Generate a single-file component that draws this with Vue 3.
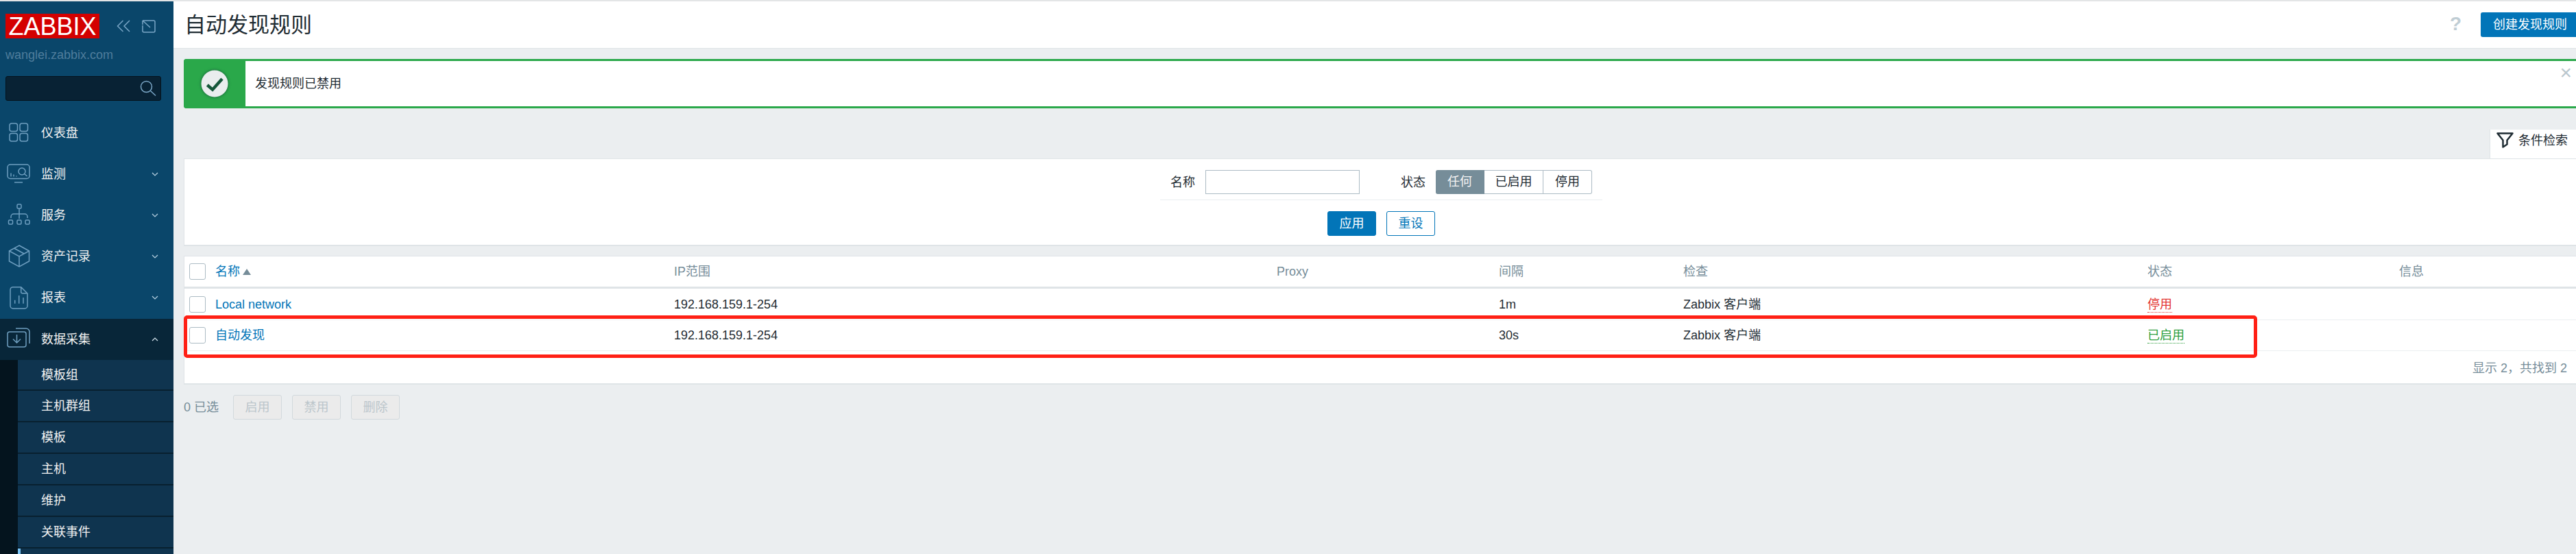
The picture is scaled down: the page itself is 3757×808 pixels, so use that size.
<script setup>
const menu = [
  { label: '仪表盘', icon: 'dash' },
  { label: '监测', icon: 'mon', arrow: true },
  { label: '服务', icon: 'svc', arrow: true },
  { label: '资产记录', icon: 'box', arrow: true },
  { label: '报表', icon: 'rep', arrow: true },
]
const sub = ['模板组', '主机群组', '模板', '主机', '维护', '关联事件']
const rows = [
  { name: 'Local network', ip: '192.168.159.1-254', proxy: '', interval: '1m', check: 'Zabbix 客户端', status: '停用', cls: 'off' },
  { name: '自动发现', ip: '192.168.159.1-254', proxy: '', interval: '30s', check: 'Zabbix 客户端', status: '已启用', cls: 'on' },
]
</script>

<template>
  <div class="page">
    <aside class="side">
      <div class="brand">
        <div class="logo">ZABBIX</div>
        <svg class="collapse" width="20" height="18" viewBox="0 0 20 18" fill="none" stroke="#7ba7c7" stroke-width="1.5"><path d="M9.500 1 1.500 9l8 8M19 1l-8 8 8 8"/></svg>
        <svg class="expand" width="20" height="19" viewBox="0 0 20 19" fill="none" stroke="#7ba7c7" stroke-width="1.5"><path d="M5.500 1H17a2 2 0 0 1 2 2v13a2 2 0 0 1-2 2H3a2 2 0 0 1-2-2V8M1 1h6M1 1v6M1 1l11 10"/></svg>
      </div>
      <div class="host">wanglei.zabbix.com</div>
      <div class="search">
        <svg width="24" height="24" viewBox="0 0 24 24" fill="none" stroke="#7ba7c7" stroke-width="1.5"><circle cx="9.500" cy="9.500" r="8"/><path d="m15.500 15.500 7.500 7"/></svg>
      </div>
      <nav class="nav">
        <div v-for="m in menu" :key="m.label" class="item">
          <svg class="ico" width="36" height="60" viewBox="0 0 36 60" fill="none" stroke="#6f9fc0" stroke-width="1.5">
            <g v-if="m.icon === 'dash'"><rect x="4" y="16" width="11.500" height="11.500" rx="3"/><rect x="19" y="16" width="11.500" height="11.500" rx="3"/><rect x="4" y="30.500" width="11.500" height="11.500" rx="3"/><rect x="19" y="30.500" width="11.500" height="11.500" rx="3"/></g>
            <g v-else-if="m.icon === 'mon'"><rect x="1" y="16" width="32" height="20.500" rx="4"/><path d="M11 42h12M6 33.500v-5M10 33.500v-3M14 33.500v-1"/><circle cx="22" cy="26" r="5"/><path d="m25.500 29.500 4 3.500"/></g>
            <g v-else-if="m.icon === 'svc'"><rect x="15" y="14" width="6" height="6" rx="1.500"/><rect x="2.500" y="37" width="6" height="6" rx="1.500"/><rect x="15" y="37" width="6" height="6" rx="1.500"/><rect x="27" y="37" width="6" height="6" rx="1.500"/><path d="M18 20v15M6 34v-2a4 4 0 0 1 4-4h16a4 4 0 0 1 4 4v2"/></g>
            <g v-else-if="m.icon === 'box'"><path d="m18 14 14.500 8v15L18 45 3.500 37V22zM3.500 22 18 30l14.500-8M18 30v15M10.500 18 25 26"/></g>
            <g v-else><path d="M20.700 14.700H9a4 4 0 0 0-4 4V42a4 4 0 0 0 4 4h17a4 4 0 0 0 4-4V24zM20.700 14.700v7a2 2 0 0 0 2 2H30M11.700 38.700v-5M17.700 38.700V27M24 38.700V30"/></g>
          </svg>
          <span>{{ m.label }}</span>
          <svg v-if="m.arrow" class="chev" width="10" height="6" viewBox="0 0 10 6" fill="none" stroke="#b9d2e3" stroke-width="1.2"><path d="m1 1 4 4 4-4"/></svg>
        </div>
        <div class="item active">
          <svg class="ico" width="36" height="60" viewBox="0 0 36 60" fill="none" stroke="#6f9fc0" stroke-width="1.5"><rect x="1" y="19" width="27" height="22" rx="3"/><path d="M13 14h15a5 5 0 0 1 5 5v17M14.500 23v12M9 29.500l5.500 5.500 5.500-5.500"/></svg>
          <span>数据采集</span>
          <svg class="chev" width="10" height="6" viewBox="0 0 10 6" fill="none" stroke="#d7e5ef" stroke-width="1.2"><path d="m1 5 4-4 4 4"/></svg>
        </div>
        <div class="subwrap">
          <div v-for="s in sub" :key="s" class="subitem">{{ s }}</div>
          <div class="subsel"></div>
        </div>
      </nav>
    </aside>

    <main class="main">
      <header class="head">
        <h1>自动发现规则</h1>
        <span class="help">?</span>
        <button class="create">创建发现规则</button>
      </header>

      <div class="msg">
        <div class="msg-ico">
          <svg class="tick" width="40" height="40" viewBox="0 0 40 40"><circle cx="20" cy="20" r="19.500" fill="#e9edee"/><path d="m9.300 22 7.700 6.700L31 13" fill="none" stroke="#15573a" stroke-width="4.500"/></svg>
        </div>
        <span class="msg-text">发现规则已禁用</span>
        <span class="msg-x">×</span>
      </div>

      <div class="tabrow">
        <div class="tab">
          <svg width="25" height="23" viewBox="0 0 25 23" fill="none" stroke="#1f2c33" stroke-width="2.500" stroke-linejoin="round"><path d="M1.500 1.500h22l-8 10v6l-6 4v-10z"/></svg>
          <span>条件检索</span>
        </div>
      </div>

      <section class="filter">
        <div class="f-row">
          <label class="f-lab">名称</label>
          <input class="f-input" type="text" />
          <label class="f-lab f-lab2">状态</label>
          <div class="seg">
            <span class="seg1 sel">任何</span>
            <span class="seg2">已启用</span>
            <span class="seg3">停用</span>
          </div>
        </div>
        <div class="f-actions">
          <button class="apply">应用</button>
          <button class="reset">重设</button>
        </div>
      </section>

      <section class="list">
        <table>
          <colgroup>
            <col class="c1" /><col class="c2" /><col class="c3" /><col class="c4" />
            <col class="c5" /><col class="c6" /><col class="c7" /><col />
          </colgroup>
          <thead>
            <tr>
              <th><span class="cb"></span></th>
              <th class="link">名称<i class="sort"></i></th>
              <th>IP范围</th>
              <th>Proxy</th>
              <th>间隔</th>
              <th>检查</th>
              <th>状态</th>
              <th>信息</th>
            </tr>
          </thead>
          <tbody>
            <tr v-for="r in rows" :key="r.name">
              <td><span class="cb"></span></td>
              <td class="link">{{ r.name }}</td>
              <td>{{ r.ip }}</td>
              <td>{{ r.proxy }}</td>
              <td>{{ r.interval }}</td>
              <td>{{ r.check }}</td>
              <td><span :class="r.cls">{{ r.status }}</span></td>
              <td></td>
            </tr>
          </tbody>
        </table>
        <div class="count">显示 2，共找到 2</div>
        <div class="mark"></div>
      </section>

      <div class="bulk">
        <span class="sel-n">0 已选</span>
        <button disabled>启用</button>
        <button disabled>禁用</button>
        <button disabled>删除</button>
      </div>
    </main>
  </div>
</template>

<style>
html, body { margin: 0; overflow: hidden; }
</style>

<style scoped>
.page {
  display: flex;
  width: 3757px;
  height: 808px;
  box-sizing: border-box;
  padding-top: 2px;
  overflow: hidden;
  background: #e3e5e6;
  font: 18px/24px "Liberation Sans", "Noto Sans CJK SC", sans-serif;
  color: #1f2c33;
}
button { font: inherit; box-sizing: border-box; margin: 0; cursor: default; }

.side { flex: 0 0 253px; height: 806px; background: #0a466a; color: #f2f2f2; overflow: hidden; }
.brand { display: flex; align-items: center; height: 36px; padding: 18px 0 0 8px; }
.logo { width: 137px; height: 36px; background: #d40000; color: #fff; font-size: 36px; line-height: 37px; text-align: center; }
.collapse { margin: 0 0 0 25px; }
.expand { margin-left: 17px; }
.host { margin: 12px 0 0 8px; color: #4f7d9c; height: 24px; }
.search { box-sizing: border-box; display: flex; justify-content: flex-end; align-items: center; width: 227px; height: 36px; margin: 19px 0 0 8px; padding-right: 6px; background: #082234; border: 1px solid #04121c; border-radius: 3px; }
.nav { margin-top: 17px; }
.item { position: relative; display: flex; align-items: center; height: 60px; padding-left: 60px; }
.item.active { background: #082639; margin-top: 1px; }
.ico { position: absolute; left: 10px; top: 0; }
.chev { position: absolute; left: 221px; }
.subwrap { border-left: 26px solid #04141e; background: #0f344f; }
.subitem { box-sizing: border-box; display: flex; align-items: center; height: 46px; padding-left: 34px; border-bottom: 2px solid #08202f; }
.subitem:first-child { height: 45px; }
.subsel { width: 4px; height: 30px; background: #7bc4f5; }

.main { flex: 1; min-width: 0; background: #ebeef0; }
.head { box-sizing: border-box; display: flex; align-items: center; height: 69px; padding-left: 16px; background: #fff; border-bottom: 1px solid #dfe4e7; }
h1 { flex: 1; margin: 2px 0 0; font-size: 31px; line-height: 40px; font-weight: 400; }
.help { color: #c0cdd4; font-size: 28px; font-weight: 700; margin: 0 28px 2px 0; }
.create { flex: 0 0 139px; height: 36px; margin-bottom: 1px; padding: 0 0 0 18px; text-align: left; white-space: nowrap; background: #0275b8; color: #fff; border: 0; border-radius: 3px 0 0 3px; }

.msg { position: relative; box-sizing: border-box; display: flex; align-items: center; height: 72px; margin: 15px 0 0 15px; background: #fff; border: solid #2aa84a; border-width: 3px 0; border-radius: 4px 0 0 4px; }
.msg-ico { display: flex; align-items: center; justify-content: center; align-self: stretch; width: 90px; margin: -3px 0; background: #2aa84a; border-radius: 4px 0 0 4px; }
.tick { filter: drop-shadow(0 0 2px #15573a); }
.msg-text { margin-left: 14px; }
.msg-x { position: absolute; right: 6px; top: 2px; color: #b9c6cd; font-size: 30px; line-height: 30px; }

.tabrow { display: flex; justify-content: flex-end; margin-top: 31px; height: 42px; }
.tab { box-sizing: border-box; display: flex; align-items: flex-start; gap: 7px; width: 126px; height: 42px; padding: 4px 0 0 9px; background: #fff; border-left: 1px solid #dfe4e7; }

.filter { box-sizing: border-box; height: 128px; margin-left: 15px; padding-left: 3px; background: #fff; border: solid #dfe4e7; border-width: 1px 0 2px 1px; }
.f-row { display: flex; align-items: center; box-sizing: border-box; width: 645px; height: 60px; margin: 0 auto; padding: 16px 0 8px 15px; border-bottom: 1px solid #ebeef0; }
.f-lab { width: 36px; }
.f-lab2 { margin-left: 60px; }
.f-input { box-sizing: border-box; width: 225px; height: 35px; margin: 0 0 0 15px; padding: 0; border: 1px solid #acbbc4; background: #fff; }
.seg { display: flex; height: 35px; margin-left: 15px; }
.seg span { box-sizing: border-box; height: 35px; line-height: 33px; text-align: center; border: 1px solid #acbbc4; border-left: 0; background: #fff; }
.seg1 { width: 71px; }
.seg2 { width: 86px; }
.seg3 { width: 71px; border-radius: 0 3px 3px 0; }
.seg .sel { background: #768d99; border-color: #768d99; color: #f2f2f2; border-radius: 3px 0 0 3px; }
.f-actions { display: flex; justify-content: center; gap: 15px; margin-top: 16px; }
.apply, .reset { width: 71px; height: 36px; padding: 0; border-radius: 3px; }
.apply { background: #0275b8; border: 1px solid #0275b8; color: #fff; }
.reset { background: #fff; border: 1px solid #0275b8; color: #0275b8; }

.list { position: relative; box-sizing: border-box; height: 188px; margin: 14px 0 0 15px; background: #fff; border: solid #dfe4e7; border-width: 1px 0 2px 1px; }
table { width: 100%; table-layout: fixed; border-collapse: collapse; }
.c1 { width: 39px; }
.c2 { width: 667px; }
.c3 { width: 879px; }
.c4 { width: 324px; }
.c5 { width: 269px; }
.c6 { width: 677px; }
.c7 { width: 367px; }
th, td { padding: 0 0 0 8px; text-align: left; font-weight: 400; }
th:first-child, td:first-child { padding-left: 7px; }
th.link, td.link { padding-left: 6px; color: #0275b8; }
th { height: 44px; color: #768d99; border-bottom: 3px solid #dfe4e7; }
td { height: 45px; border-bottom: 1px solid #ebeef0; }
tr:last-child td { height: 44px; }
.cb { display: block; box-sizing: border-box; width: 24px; height: 24px; background: #fff; border: 1px solid #acbbc4; border-radius: 3px; }
.sort { display: inline-block; margin: 0 0 1px 4px; border: 6px solid transparent; border-top: 0; border-bottom: 9px solid #768d99; vertical-align: middle; }
.off, .on { border-bottom: 1px dotted; padding-bottom: 1px; }
.off { color: #e33734; }
.on { color: #2f9f3f; }
.count { padding: 13px 13px 0 0; text-align: right; color: #768d99; }
.mark { position: absolute; left: -1px; top: 86px; width: 3024px; height: 62px; box-sizing: border-box; border: 5px solid #ff2015; border-radius: 5px; pointer-events: none; }

.bulk { display: flex; align-items: center; gap: 15px; margin: 15px 0 0 15px; height: 36px; }
.sel-n { width: 57px; color: #768d99; }
.bulk button { width: 71px; height: 36px; padding: 0; background: #ebebeb; border: 1px solid #d2d9dd; border-radius: 3px; color: #bcc6cb; }
</style>
